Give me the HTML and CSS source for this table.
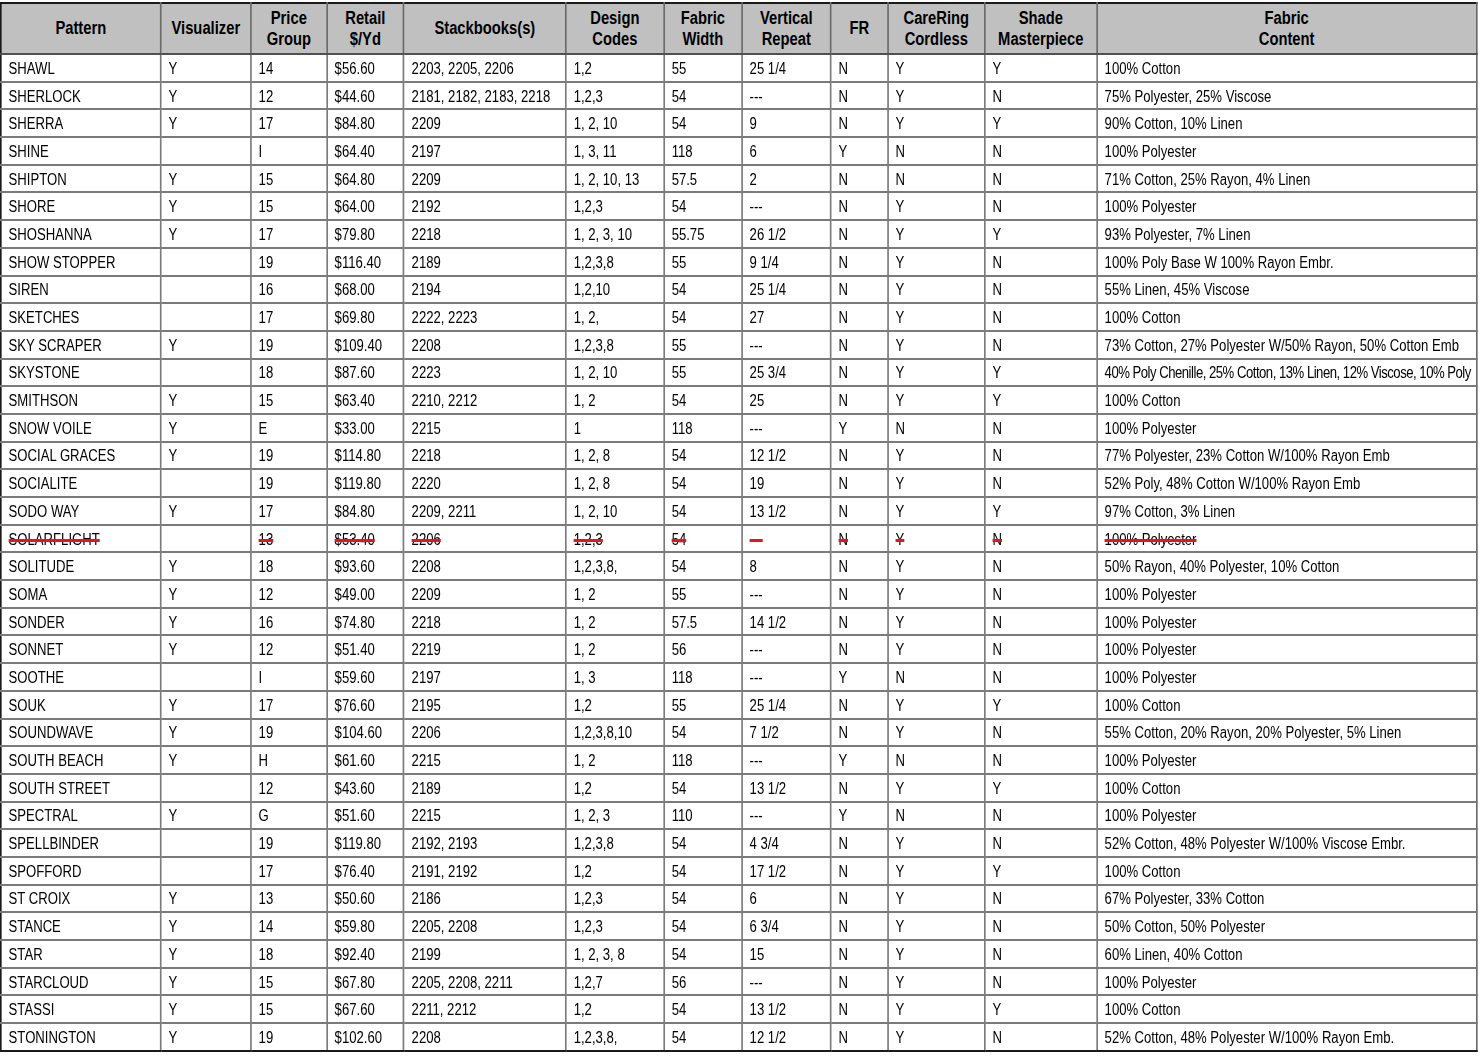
FILE: index.html
```html
<!DOCTYPE html>
<html>
<head>
<meta charset="utf-8">
<link rel="stylesheet" href="styles.css">
</head>
<body>
<div class="sheet">
<table class="grid">
<colgroup>
<col class="c-pattern"><col class="c-vis"><col class="c-price"><col class="c-retail"><col class="c-stack"><col class="c-design"><col class="c-width"><col class="c-repeat"><col class="c-fr"><col class="c-care"><col class="c-shade"><col class="c-content">
</colgroup>
<thead>
<tr><th>Pattern</th><th>Visualizer</th><th>Price<br>Group</th><th>Retail<br>$/Yd</th><th>Stackbooks(s)</th><th>Design<br>Codes</th><th>Fabric<br>Width</th><th>Vertical<br>Repeat</th><th>FR</th><th>CareRing<br>Cordless</th><th>Shade<br>Masterpiece</th><th>Fabric<br>Content</th></tr>
</thead>
<tbody>
<tr><td>SHAWL</td><td>Y</td><td>14</td><td>$56.60</td><td>2203, 2205, 2206</td><td>1,2</td><td>55</td><td>25 1/4</td><td>N</td><td>Y</td><td>Y</td><td>100% Cotton</td></tr>
<tr><td>SHERLOCK</td><td>Y</td><td>12</td><td>$44.60</td><td>2181, 2182, 2183, 2218</td><td>1,2,3</td><td>54</td><td>---</td><td>N</td><td>Y</td><td>N</td><td>75% Polyester, 25% Viscose</td></tr>
<tr><td>SHERRA</td><td>Y</td><td>17</td><td>$84.80</td><td>2209</td><td>1, 2, 10</td><td>54</td><td>9</td><td>N</td><td>Y</td><td>Y</td><td>90% Cotton, 10% Linen</td></tr>
<tr><td>SHINE</td><td></td><td>I</td><td>$64.40</td><td>2197</td><td>1, 3, 11</td><td>118</td><td>6</td><td>Y</td><td>N</td><td>N</td><td>100% Polyester</td></tr>
<tr><td>SHIPTON</td><td>Y</td><td>15</td><td>$64.80</td><td>2209</td><td>1, 2, 10, 13</td><td>57.5</td><td>2</td><td>N</td><td>N</td><td>N</td><td>71% Cotton, 25% Rayon, 4% Linen</td></tr>
<tr><td>SHORE</td><td>Y</td><td>15</td><td>$64.00</td><td>2192</td><td>1,2,3</td><td>54</td><td>---</td><td>N</td><td>Y</td><td>N</td><td>100% Polyester</td></tr>
<tr><td>SHOSHANNA</td><td>Y</td><td>17</td><td>$79.80</td><td>2218</td><td>1, 2, 3, 10</td><td>55.75</td><td>26 1/2</td><td>N</td><td>Y</td><td>Y</td><td>93% Polyester, 7% Linen</td></tr>
<tr><td>SHOW STOPPER</td><td></td><td>19</td><td>$116.40</td><td>2189</td><td>1,2,3,8</td><td>55</td><td>9 1/4</td><td>N</td><td>Y</td><td>N</td><td>100% Poly Base W 100% Rayon Embr.</td></tr>
<tr><td>SIREN</td><td></td><td>16</td><td>$68.00</td><td>2194</td><td>1,2,10</td><td>54</td><td>25 1/4</td><td>N</td><td>Y</td><td>N</td><td>55% Linen, 45% Viscose</td></tr>
<tr><td>SKETCHES</td><td></td><td>17</td><td>$69.80</td><td>2222, 2223</td><td>1, 2,</td><td>54</td><td>27</td><td>N</td><td>Y</td><td>N</td><td>100% Cotton</td></tr>
<tr><td>SKY SCRAPER</td><td>Y</td><td>19</td><td>$109.40</td><td>2208</td><td>1,2,3,8</td><td>55</td><td>---</td><td>N</td><td>Y</td><td>N</td><td>73% Cotton, 27% Polyester W/50% Rayon, 50% Cotton Emb</td></tr>
<tr><td>SKYSTONE</td><td></td><td>18</td><td>$87.60</td><td>2223</td><td>1, 2, 10</td><td>55</td><td>25 3/4</td><td>N</td><td>Y</td><td>Y</td><td class="tight">40% Poly Chenille, 25% Cotton, 13% Linen, 12% Viscose, 10% Poly</td></tr>
<tr><td>SMITHSON</td><td>Y</td><td>15</td><td>$63.40</td><td>2210, 2212</td><td>1, 2</td><td>54</td><td>25</td><td>N</td><td>Y</td><td>Y</td><td>100% Cotton</td></tr>
<tr><td>SNOW VOILE</td><td>Y</td><td>E</td><td>$33.00</td><td>2215</td><td>1</td><td>118</td><td>---</td><td>Y</td><td>N</td><td>N</td><td>100% Polyester</td></tr>
<tr><td>SOCIAL GRACES</td><td>Y</td><td>19</td><td>$114.80</td><td>2218</td><td>1, 2, 8</td><td>54</td><td>12 1/2</td><td>N</td><td>Y</td><td>N</td><td>77% Polyester, 23% Cotton W/100% Rayon Emb</td></tr>
<tr><td>SOCIALITE</td><td></td><td>19</td><td>$119.80</td><td>2220</td><td>1, 2, 8</td><td>54</td><td>19</td><td>N</td><td>Y</td><td>N</td><td>52% Poly, 48% Cotton W/100% Rayon Emb</td></tr>
<tr><td>SODO WAY</td><td>Y</td><td>17</td><td>$84.80</td><td>2209, 2211</td><td>1, 2, 10</td><td>54</td><td>13 1/2</td><td>N</td><td>Y</td><td>Y</td><td>97% Cotton, 3% Linen</td></tr>
<tr class="struck"><td><s>SOLARFLIGHT</s></td><td></td><td><s>13</s></td><td><s>$53.40</s></td><td><s>2206</s></td><td><s>1,2,3</s></td><td><s>54</s></td><td><s>---</s></td><td><s>N</s></td><td><s>Y</s></td><td><s>N</s></td><td><s>100% Polyester</s></td></tr>
<tr><td>SOLITUDE</td><td>Y</td><td>18</td><td>$93.60</td><td>2208</td><td>1,2,3,8,</td><td>54</td><td>8</td><td>N</td><td>Y</td><td>N</td><td>50% Rayon, 40% Polyester, 10% Cotton</td></tr>
<tr><td>SOMA</td><td>Y</td><td>12</td><td>$49.00</td><td>2209</td><td>1, 2</td><td>55</td><td>---</td><td>N</td><td>Y</td><td>N</td><td>100% Polyester</td></tr>
<tr><td>SONDER</td><td>Y</td><td>16</td><td>$74.80</td><td>2218</td><td>1, 2</td><td>57.5</td><td>14 1/2</td><td>N</td><td>Y</td><td>N</td><td>100% Polyester</td></tr>
<tr><td>SONNET</td><td>Y</td><td>12</td><td>$51.40</td><td>2219</td><td>1, 2</td><td>56</td><td>---</td><td>N</td><td>Y</td><td>N</td><td>100% Polyester</td></tr>
<tr><td>SOOTHE</td><td></td><td>I</td><td>$59.60</td><td>2197</td><td>1, 3</td><td>118</td><td>---</td><td>Y</td><td>N</td><td>N</td><td>100% Polyester</td></tr>
<tr><td>SOUK</td><td>Y</td><td>17</td><td>$76.60</td><td>2195</td><td>1,2</td><td>55</td><td>25 1/4</td><td>N</td><td>Y</td><td>Y</td><td>100% Cotton</td></tr>
<tr><td>SOUNDWAVE</td><td>Y</td><td>19</td><td>$104.60</td><td>2206</td><td>1,2,3,8,10</td><td>54</td><td>7 1/2</td><td>N</td><td>Y</td><td>N</td><td>55% Cotton, 20% Rayon, 20% Polyester, 5% Linen</td></tr>
<tr><td>SOUTH BEACH</td><td>Y</td><td>H</td><td>$61.60</td><td>2215</td><td>1, 2</td><td>118</td><td>---</td><td>Y</td><td>N</td><td>N</td><td>100% Polyester</td></tr>
<tr><td>SOUTH STREET</td><td></td><td>12</td><td>$43.60</td><td>2189</td><td>1,2</td><td>54</td><td>13 1/2</td><td>N</td><td>Y</td><td>Y</td><td>100% Cotton</td></tr>
<tr><td>SPECTRAL</td><td>Y</td><td>G</td><td>$51.60</td><td>2215</td><td>1, 2, 3</td><td>110</td><td>---</td><td>Y</td><td>N</td><td>N</td><td>100% Polyester</td></tr>
<tr><td>SPELLBINDER</td><td></td><td>19</td><td>$119.80</td><td>2192, 2193</td><td>1,2,3,8</td><td>54</td><td>4 3/4</td><td>N</td><td>Y</td><td>N</td><td>52% Cotton, 48% Polyester W/100% Viscose Embr.</td></tr>
<tr><td>SPOFFORD</td><td></td><td>17</td><td>$76.40</td><td>2191, 2192</td><td>1,2</td><td>54</td><td>17 1/2</td><td>N</td><td>Y</td><td>Y</td><td>100% Cotton</td></tr>
<tr><td>ST CROIX</td><td>Y</td><td>13</td><td>$50.60</td><td>2186</td><td>1,2,3</td><td>54</td><td>6</td><td>N</td><td>Y</td><td>N</td><td>67% Polyester, 33% Cotton</td></tr>
<tr><td>STANCE</td><td>Y</td><td>14</td><td>$59.80</td><td>2205, 2208</td><td>1,2,3</td><td>54</td><td>6 3/4</td><td>N</td><td>Y</td><td>N</td><td>50% Cotton, 50% Polyester</td></tr>
<tr><td>STAR</td><td>Y</td><td>18</td><td>$92.40</td><td>2199</td><td>1, 2, 3, 8</td><td>54</td><td>15</td><td>N</td><td>Y</td><td>N</td><td>60% Linen, 40% Cotton</td></tr>
<tr><td>STARCLOUD</td><td>Y</td><td>15</td><td>$67.80</td><td>2205, 2208, 2211</td><td>1,2,7</td><td>56</td><td>---</td><td>N</td><td>Y</td><td>N</td><td>100% Polyester</td></tr>
<tr><td>STASSI</td><td>Y</td><td>15</td><td>$67.60</td><td>2211, 2212</td><td>1,2</td><td>54</td><td>13 1/2</td><td>N</td><td>Y</td><td>Y</td><td>100% Cotton</td></tr>
<tr><td>STONINGTON</td><td>Y</td><td>19</td><td>$102.60</td><td>2208</td><td>1,2,3,8,</td><td>54</td><td>12 1/2</td><td>N</td><td>Y</td><td>N</td><td>52% Cotton, 48% Polyester W/100% Rayon Emb.</td></tr>
</tbody>
</table>
</div>
</body>
</html>
```
FILE: styles.css
```css
html, body {
  margin: 0;
  padding: 0;
  background: #ffffff;
  overflow: hidden;
}
body {
  padding-top: 2px;
  font-family: "Liberation Sans", Arial, sans-serif;
  color: #000;
}
.sheet {
  width: 1479px;
  overflow: hidden;
}
/* Arial Narrow is not installed: lay the table out at 1/0.82 width
   and condense it horizontally, so glyphs get narrow proportions. */
.grid {
  border-collapse: collapse;
  table-layout: fixed;
  width: 1801px;
  border: 2.4px solid #1a1a1a;
  transform: scaleX(0.82);
  transform-origin: 0 0;
}
.c-pattern { width: 195.1px; }
.c-vis { width: 109.8px; }
.c-price { width: 92.7px; }
.c-retail { width: 93.9px; }
.c-stack { width: 197.6px; }
.c-design { width: 119.5px; }
.c-width { width: 95.1px; }
.c-repeat { width: 108.5px; }
.c-fr { width: 69.5px; }
.c-care { width: 118.3px; }
.c-shade { width: 136.6px; }
.c-content { width: 463px; }
.grid th {
  background: #c0c0c0;
  font-weight: bold;
  font-size: 18px;
  line-height: 21px;
  height: 49px;
  padding: 0 2px;
  text-align: center;
  vertical-align: middle;
  border: 2.4px solid #6a6a6a;
  border-top-color: #1a1a1a;
  border-bottom: 2px solid #505050;
}
.grid td {
  font-size: 16px;
  line-height: 18px;
  height: 23.7px;
  padding: 2px 0 0 8.5px;
  text-align: left;
  vertical-align: middle;
  white-space: nowrap;
  overflow: hidden;
  border: 2.4px solid #7a7a7a;
  border-top-width: 2px;
  border-bottom-width: 2px;
}
.grid td.tight { letter-spacing: -0.6px; }
.grid td:first-child, .grid th:first-child { border-left-color: #1a1a1a; }
.grid td:last-child, .grid th:last-child { border-right-color: #6a6a6a; }
.grid tr:last-child td { border-bottom-color: #1a1a1a; }
.struck s {
  text-decoration: line-through;
  text-decoration-color: #e8141c;
  text-decoration-thickness: 3px;
}
```
